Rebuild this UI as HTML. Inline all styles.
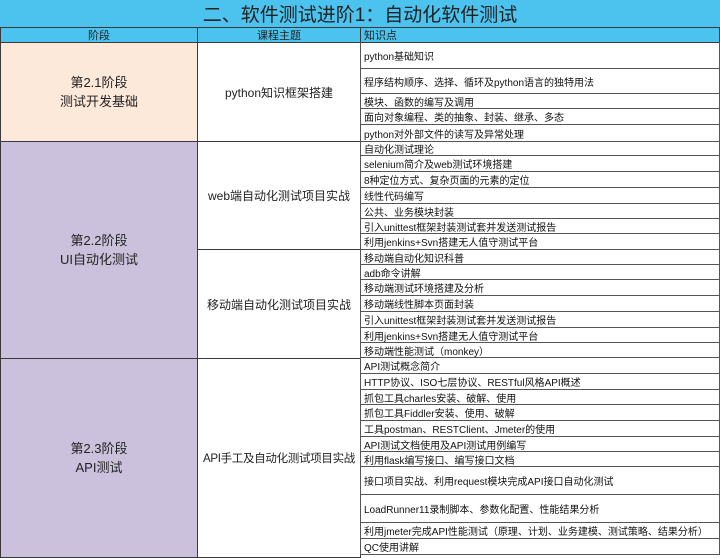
<!DOCTYPE html><html><head><meta charset="utf-8"><style>
*{margin:0;padding:0;box-sizing:border-box}
body{width:720px;height:557px;overflow:hidden;background:#fff;font-family:"Liberation Sans","Noto Sans CJK SC",sans-serif;position:relative}
.b{position:absolute;border:1px solid #3a3a3a;display:flex;align-items:center;justify-content:center;text-align:center;color:#222;white-space:nowrap}
.r{position:absolute;left:360px;width:360px;border:1px solid #555;border-top:none;display:flex;align-items:center;padding-left:3px;font-size:10px;color:#111;white-space:nowrap;overflow:hidden}
</style></head><body>
<div class="b" style="left:0;top:0;width:720px;height:28px;background:#4bc3ee;font-size:19px;color:#222;border:none;border-bottom:1px solid #333">二、软件测试进阶1：自动化软件测试</div>
<div class="b" style="left:0;top:27px;width:198px;height:16px;background:#4bc3ee;font-size:11px">阶段</div>
<div class="b" style="left:197px;top:27px;width:164px;height:16px;background:#4bc3ee;font-size:11px">课程主题</div>
<div class="b" style="left:360px;top:27px;width:360px;height:16px;background:#4bc3ee;font-size:11px;justify-content:flex-start;padding-left:3px">知识点</div>
<div class="b" style="left:0;top:42px;width:198px;height:100px;background:#fde9da;font-size:13px;line-height:19px">第2.1阶段<br>测试开发基础</div>
<div class="b" style="left:197px;top:42px;width:164px;height:100px;font-size:12px">python知识框架搭建</div>
<div class="b" style="left:0;top:141px;width:198px;height:218px;background:#ccc1dc;font-size:13px;line-height:19px">第2.2阶段<br>UI自动化测试</div>
<div class="b" style="left:197px;top:141px;width:164px;height:109px;font-size:12px">web端自动化测试项目实战</div>
<div class="b" style="left:197px;top:249px;width:164px;height:110px;font-size:12px">移动端自动化测试项目实战</div>
<div class="b" style="left:0;top:358px;width:198px;height:200px;background:#ccc1dc;font-size:13px;line-height:19px">第2.3阶段<br>API测试</div>
<div class="b" style="left:197px;top:358px;width:164px;height:200px;font-size:11.5px;padding:0;letter-spacing:-0.3px">API手工及自动化测试项目实战</div>
<div class="r" style="top:42px;height:27px">python基础知识</div>
<div class="r" style="top:69px;height:25px">程序结构顺序、选择、循环及python语言的独特用法</div>
<div class="r" style="top:94px;height:15px">模块、函数的编写及调用</div>
<div class="r" style="top:109px;height:16px">面向对象编程、类的抽象、封装、继承、多态</div>
<div class="r" style="top:125px;height:17px">python对外部文件的读写及异常处理</div>
<div class="r" style="top:142px;height:14px">自动化测试理论</div>
<div class="r" style="top:156px;height:16px">selenium简介及web测试环境搭建</div>
<div class="r" style="top:172px;height:16px">8种定位方式、复杂页面的元素的定位</div>
<div class="r" style="top:188px;height:16px">线性代码编写</div>
<div class="r" style="top:204px;height:15px">公共、业务模块封装</div>
<div class="r" style="top:219px;height:15px">引入unittest框架封装测试套并发送测试报告</div>
<div class="r" style="top:234px;height:16px">利用jenkins+Svn搭建无人值守测试平台</div>
<div class="r" style="top:250px;height:15px">移动端自动化知识科普</div>
<div class="r" style="top:265px;height:15px">adb命令讲解</div>
<div class="r" style="top:280px;height:16px">移动端测试环境搭建及分析</div>
<div class="r" style="top:296px;height:16px">移动端线性脚本页面封装</div>
<div class="r" style="top:312px;height:16px">引入unittest框架封装测试套并发送测试报告</div>
<div class="r" style="top:328px;height:15px">利用jenkins+Svn搭建无人值守测试平台</div>
<div class="r" style="top:343px;height:15px">移动端性能测试（monkey）</div>
<div class="r" style="top:358px;height:16px">API测试概念简介</div>
<div class="r" style="top:374px;height:16px">HTTP协议、ISO七层协议、RESTful风格API概述</div>
<div class="r" style="top:390px;height:15px">抓包工具charles安装、破解、使用</div>
<div class="r" style="top:405px;height:16px">抓包工具Fiddler安装、使用、破解</div>
<div class="r" style="top:421px;height:16px">工具postman、RESTClient、Jmeter的使用</div>
<div class="r" style="top:437px;height:15px">API测试文档使用及API测试用例编写</div>
<div class="r" style="top:452px;height:15px">利用flask编写接口、编写接口文档</div>
<div class="r" style="top:467px;height:28px">接口项目实战、利用request模块完成API接口自动化测试</div>
<div class="r" style="top:495px;height:28px">LoadRunner11录制脚本、参数化配置、性能结果分析</div>
<div class="r" style="top:523px;height:16px">利用jmeter完成API性能测试（原理、计划、业务建模、测试策略、结果分析）</div>
<div class="r" style="top:539px;height:16px">QC使用讲解</div>
</body></html>
